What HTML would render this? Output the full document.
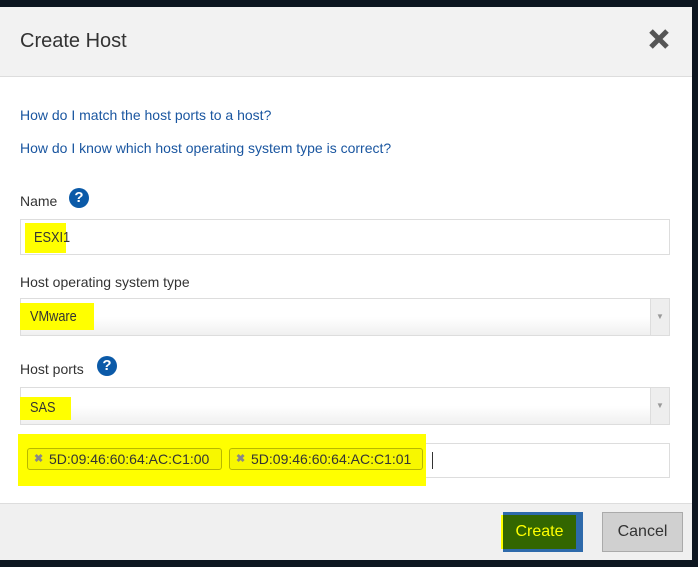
<!DOCTYPE html>
<html><head><meta charset="utf-8"><style>
*{box-sizing:border-box;margin:0;padding:0}
body{width:698px;height:567px;background:#0d1620;position:relative;overflow:hidden;font-family:"Liberation Sans",Arial,sans-serif}
.dlg{position:absolute;left:0;top:7px;width:692px;height:553px;background:#fff}
.hdr{position:absolute;left:0;top:0;width:692px;height:70px;background:#f2f2f2;border-bottom:1px solid #ddd}
.title{position:absolute;left:20px;top:23px;font-size:20px;color:#333}
.x{position:absolute;left:648px;top:21px}
.a{position:absolute;left:20px;font-size:14px;color:#1a56a0}
.lbl{position:absolute;left:20px;font-size:14px;color:#333}
.q{position:absolute;width:20px;height:20px;border-radius:50%;background:#0b5aa8;color:#fff;font-weight:bold;font-size:15px;text-align:center;line-height:20px}
.box{position:absolute;left:20px;width:650px;border:1px solid #ddd;background:#fff}
.sel{background:linear-gradient(#fff 50%,#f0f0f0)}
.arr{position:absolute;right:0;top:0;bottom:0;width:19px;border-left:1px solid #ddd;background:#eee;color:#999;font-size:8px;text-align:center}
.hl{position:absolute;background:#ffff00;font-size:15px;color:#333;white-space:nowrap}
.hl span{display:inline-block;transform:scaleX(.85);transform-origin:left}
.tag{position:absolute;top:448px;height:22px;border:1px solid #b8b800;border-radius:3px;background:#f7f700;font-size:14px;color:#333;line-height:20px;padding-left:21px}
.tag b{position:absolute;left:6px;top:0;color:#888;font-size:11px}
.ftr{position:absolute;left:0;top:503px;width:692px;height:57px;background:#f0f0f0;border-top:1px solid #ddd}
</style></head><body>
<div class="dlg">
<div class="hdr"><div class="title">Create Host</div>
<svg class="x" width="22" height="22" viewBox="0 0 22 22"><path d="M3 3L19 19M19 3L3 19" stroke="#555" stroke-width="5"/></svg></div>
</div>
<div class="a" style="top:107px">How do I match the host ports to a host?</div>
<div class="a" style="top:140px">How do I know which host operating system type is correct?</div>
<div class="lbl" style="top:193px">Name</div><div class="q" style="left:69px;top:188px">?</div>
<div class="box" style="top:219px;height:36px"></div>
<div class="hl" style="left:25px;top:223px;width:41px;height:30px;padding:6px 0 0 9px"><span>ESXI1</span></div>
<div class="lbl" style="top:274px">Host operating system type</div>
<div class="box sel" style="top:298px;height:38px"><div class="arr" style="line-height:36px">▼</div></div>
<div class="hl" style="left:20px;top:303px;width:74px;height:27px;padding:5px 0 0 10px"><span>VMware</span></div>
<div class="lbl" style="top:361px">Host ports</div><div class="q" style="left:97px;top:356px">?</div>
<div class="box sel" style="top:387px;height:38px"><div class="arr" style="line-height:36px">▼</div></div>
<div class="hl" style="left:20px;top:397px;width:51px;height:23px;padding:2px 0 0 10px"><span>SAS</span></div>
<div class="box" style="top:443px;height:35px"></div>
<div style="position:absolute;left:18px;top:434px;width:408px;height:52px;background:#ffff00"></div>
<div style="position:absolute;left:432px;top:452px;width:1px;height:17px;background:#333"></div>
<div class="tag" style="left:27px;width:195px"><b>✖</b>5D:09:46:60:64:AC:C1:00</div>
<div class="tag" style="left:229px;width:194px"><b>✖</b>5D:09:46:60:64:AC:C1:01</div>
<div class="ftr"></div>
<div style="position:absolute;left:503px;top:512px;width:80px;height:40px;background:#2e6aab"></div>
<div style="position:absolute;left:501px;top:515px;width:2px;height:34px;background:#ff0"></div>
<div style="position:absolute;left:503px;top:515px;width:73px;height:34px;background:#336600;color:#ff0;font-size:16px;text-align:center;line-height:34px">Create</div>
<div style="position:absolute;left:602px;top:512px;width:81px;height:40px;background:#d0d0d0;border:1px solid #aaa;color:#333;font-size:16px;text-align:center;line-height:38px">Cancel</div>
</body></html>
